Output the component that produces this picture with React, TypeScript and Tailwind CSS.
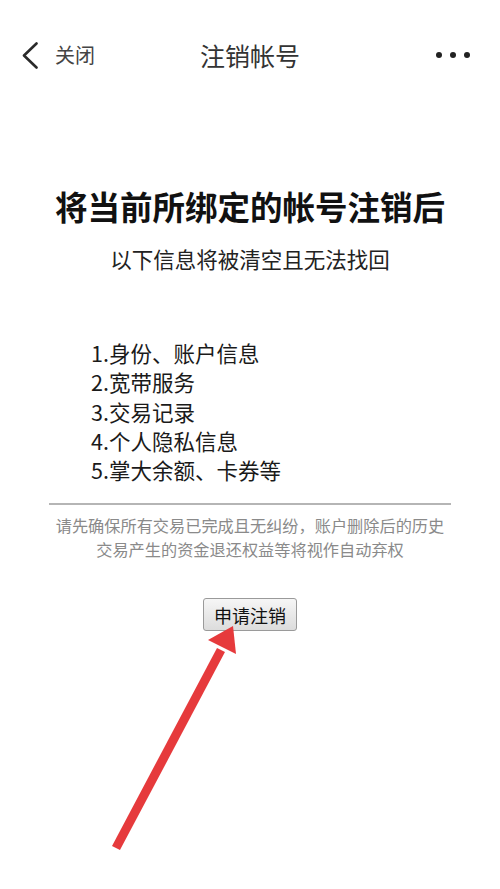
import React from "react";

export default function App() {
  const items = [
    "1.身份、账户信息",
    "2.宽带服务",
    "3.交易记录",
    "4.个人隐私信息",
    "5.掌大余额、卡券等",
  ];
  return (
    <div
      className="relative w-[500px] h-[889px] bg-white overflow-hidden"
      style={{ fontFamily: '"Noto Sans CJK SC", "Noto Sans", sans-serif' }}
    >
      {/* header */}
      <div className="relative flex items-center h-[110px] px-[22px]">
        <div className="flex items-center gap-[17px]">
          <svg width="16" height="27" viewBox="0 0 16 27" className="shrink-0">
            <polyline
              points="14.5,1.5 2,13.5 14.5,25.5"
              fill="none"
              stroke="#2a2a2a"
              strokeWidth="2.6"
              strokeLinecap="round"
              strokeLinejoin="round"
            />
          </svg>
          <span className="text-[20px] text-[#444] leading-none">关闭</span>
        </div>
        <div className="flex-1" />
        <div className="flex items-center gap-[8px] pr-[8px]">
          <span className="w-[6px] h-[6px] rounded-full bg-[#222]" />
          <span className="w-[6px] h-[6px] rounded-full bg-[#222]" />
          <span className="w-[6px] h-[6px] rounded-full bg-[#222]" />
        </div>
        <div className="absolute inset-0 flex items-center justify-center pointer-events-none">
          <span className="text-[25px] text-[#333] leading-none">注销帐号</span>
        </div>
      </div>

      {/* body */}
      <div className="flex flex-col items-center">
        <h1 className="mt-[75px] text-[32.5px] font-bold leading-[42px] text-[#111]">
          将当前所绑定的帐号注销后
        </h1>
        <p className="mt-[17px] text-[21.5px] leading-[30px] text-[#222]">
          以下信息将被清空且无法找回
        </p>
        <ul className="mt-[64px] self-stretch pl-[91px] text-[21.5px] leading-[29.3px] text-[#1a1a1a]">
          {items.map((t) => (
            <li key={t}>{t}</li>
          ))}
        </ul>
        <div className="mt-[19px] self-stretch mx-[49px] h-[2px] bg-[#b5b5b5]" />
        <p className="mt-[8px] text-[16.2px] leading-[24px] text-[#8a8a8a] text-center">
          请先确保所有交易已完成且无纠纷，账户删除后的历史
          <br />
          交易产生的资金退还权益等将视作自动弃权
        </p>
        <button className="mt-[37px] w-[94px] h-[33px] rounded-[3px] border border-[#9a9a9a] bg-gradient-to-b from-[#f6f6f6] to-[#dcdcdc] text-[18px] leading-none text-[#111]">
          申请注销
        </button>
      </div>

      {/* red arrow annotation */}
      <svg
        className="absolute left-0 top-0 pointer-events-none"
        width="500"
        height="889"
        viewBox="0 0 500 889"
      >
        <line x1="116" y1="848" x2="221" y2="650" stroke="#e63a3c" strokeWidth="9" />
        <polygon points="233,626 208,640 236,654" fill="#e63a3c" />
      </svg>
    </div>
  );
}
